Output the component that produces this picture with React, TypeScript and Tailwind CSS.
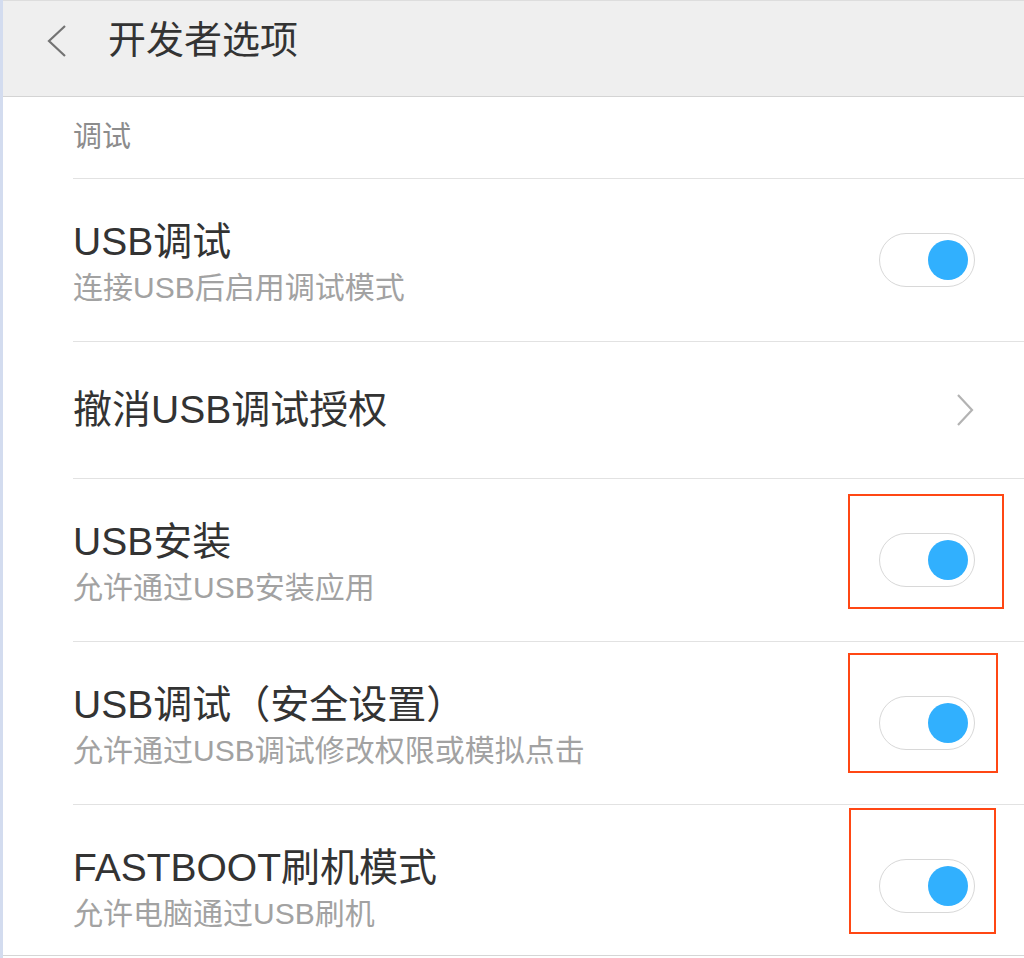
import React from 'react'

const font = { fontFamily: '"Liberation Sans", "Noto Sans CJK SC", sans-serif' }

type Box = { cls: string }

const Toggle = ({ box }: { box?: Box }) => {
  return (
    <div className="relative mr-[49px] flex h-[54px] w-[96px] shrink-0 items-center justify-end rounded-full border-[1.5px] border-[#d8d8d8] bg-white pr-[6px]">
      <div className="h-[40px] w-[40px] rounded-full bg-[#31b0fe]" />
      {box && <div className={`pointer-events-none absolute border-2 border-[#ff4714] ${box.cls}`} />}
    </div>
  )
}

const ToggleRow = ({ title, sub, box, last }: { title: string; sub: string; box?: Box; last?: boolean }) => (
  <div
    className={`flex shrink-0 items-center justify-between ${last ? 'h-[150px] pt-[12px]' : 'h-[163px] border-b border-[#e2e2e2]'}`}
  >
    <div className="flex flex-col pt-[12px]">
      <span className="text-[39px] leading-[44px] text-[#333333]">{title}</span>
      <span className="text-[30px] leading-[48px] text-[#a2a2a2]">{sub}</span>
    </div>
    <Toggle box={box} />
  </div>
)

export default function App() {
  return (
    <div className="flex h-[958px] w-[1024px] flex-col overflow-hidden border-l-[3px] border-[#d3dcef] bg-white" style={font}>
      {/* header */}
      <header className="flex h-[97px] shrink-0 items-center border-t border-b border-t-[#dddddd] border-b-[#d4d4d4] bg-[#efefef] pb-[16px]">
        <svg width="20" height="32" viewBox="0 0 20 32" className="ml-[44px]">
          <polyline points="18,1 2,16 18,31" fill="none" stroke="#737373" strokeWidth="2.2" />
        </svg>
        <h1 className="ml-[41px] text-[38px] text-[#333333]">开发者选项</h1>
      </header>

      {/* list */}
      <div className="flex flex-1 flex-col pl-[70px]">
        <div className="flex h-[82px] shrink-0 items-center border-b border-[#e2e2e2]">
          <span className="text-[29px] text-[#8c8c8c]">调试</span>
        </div>

        <ToggleRow title="USB调试" sub="连接USB后启用调试模式" />

        <div className="flex h-[137px] shrink-0 items-center justify-between border-b border-[#e2e2e2]">
          <span className="text-[39px] text-[#333333]">撤消USB调试授权</span>
          <svg width="18" height="32" viewBox="0 0 18 32" className="mr-[50px]">
            <polyline points="2,1 16,16 2,31" fill="none" stroke="#b3b3b3" strokeWidth="2.2" />
          </svg>
        </div>

        <ToggleRow
          title="USB安装"
          sub="允许通过USB安装应用"
          box={{ cls: 'left-[-32px] top-[-40px] h-[115px] w-[156px]' }}
        />
        <ToggleRow
          title="USB调试（安全设置）"
          sub="允许通过USB调试修改权限或模拟点击"
          box={{ cls: 'left-[-32px] top-[-44px] h-[120px] w-[150px]' }}
        />
        <ToggleRow
          title="FASTBOOT刷机模式"
          sub="允许电脑通过USB刷机"
          box={{ cls: 'left-[-31px] top-[-52px] h-[126px] w-[147px]' }}
          last
        />
      </div>
      <div className="h-[3px] shrink-0 border-t border-[#d6d6d6]" />
    </div>
  )
}
